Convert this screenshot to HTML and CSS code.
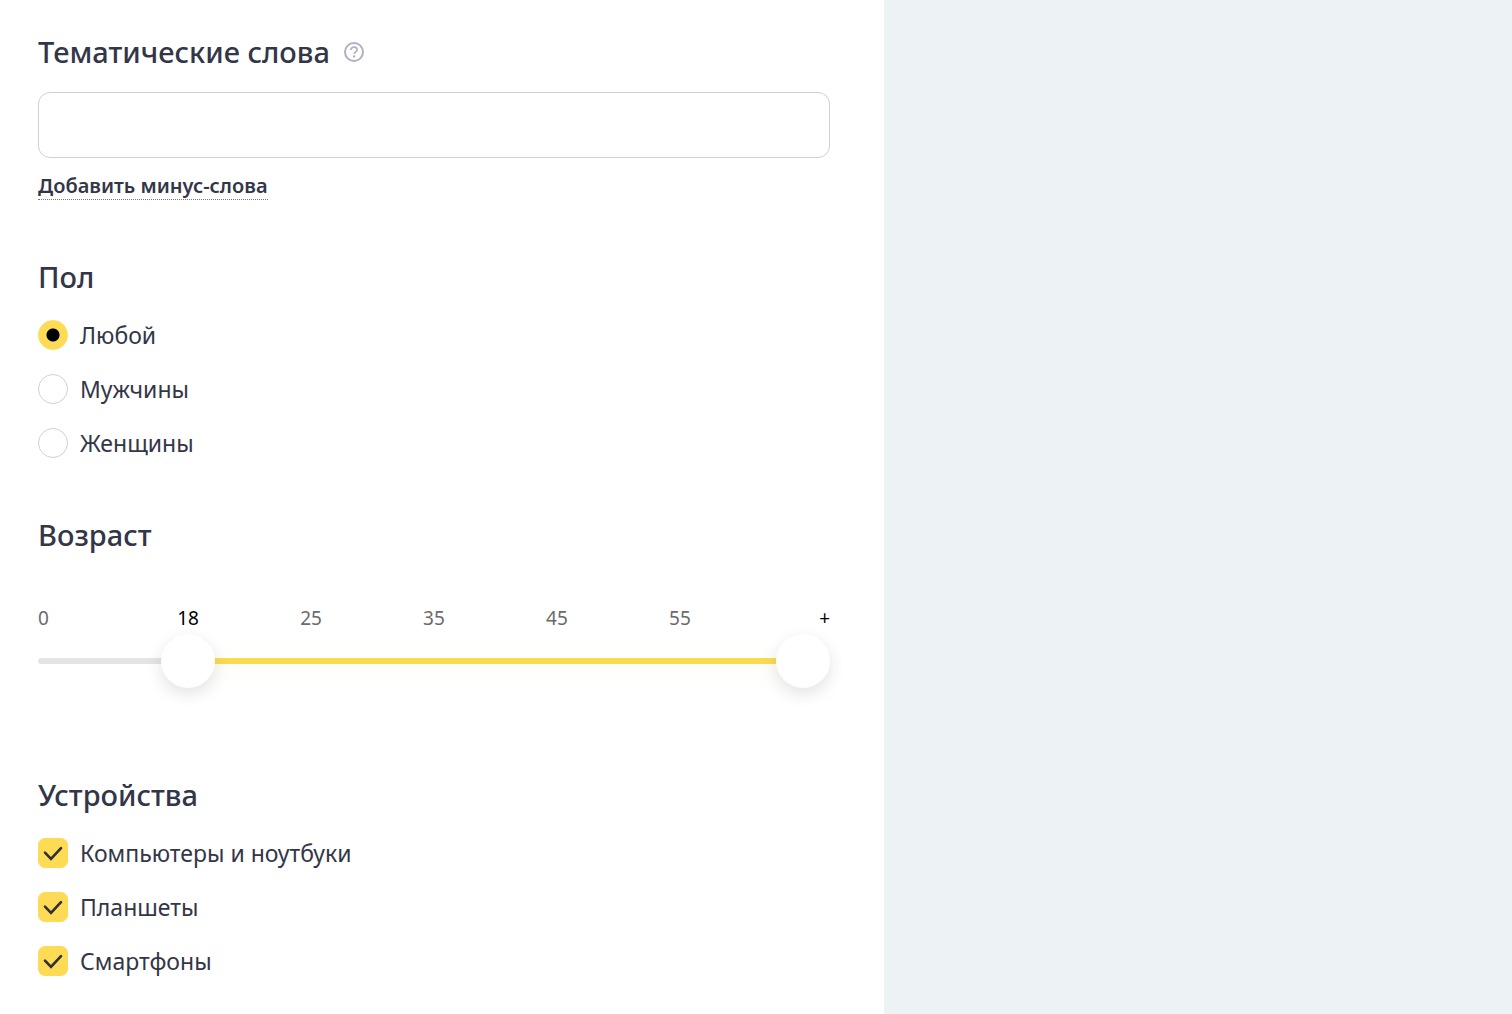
FILE: index.html
```html
<!DOCTYPE html>
<html lang="ru">
  <head>
    <meta charset="UTF-8" />
    <meta name="viewport" content="width=device-width, initial-scale=1.0" />
    <title>Настройки аудитории</title>
    <link rel="stylesheet" href="styles.css">
  </head>
  <body>
    <main class="layout">
      <form class="panel">
        <section class="section">
          <div class="heading">
            <h2 class="title"><label for="words">Тематические слова</label></h2>
            <button class="help" type="button" aria-label="Справка">
              <svg width="20" height="20" viewBox="0 0 20 20" fill="none" stroke="currentColor">
                <circle cx="10" cy="10" r="9" stroke-width="2" />
                <path d="M6.9 8C6.9 6.2 8.2 5.2 10 5.2s3.1 1 3.1 2.6c0 2.1-2.9 2-2.9 4.1" stroke-width="1.7" />
                <circle cx="10.1" cy="14.4" r="1.2" fill="currentColor" stroke="none" />
              </svg>
            </button>
          </div>
          <input class="words" id="words" type="text" />
          <a class="minus" href="#">Добавить минус-слова</a>
        </section>

        <section class="section">
          <h2 class="title">Пол</h2>
          <div class="options">
            <label class="option"><input class="radio" type="radio" name="gender" value="any" checked /> Любой</label>
            <label class="option"><input class="radio" type="radio" name="gender" value="male" /> Мужчины</label>
            <label class="option"><input class="radio" type="radio" name="gender" value="female" /> Женщины</label>
          </div>
        </section>

        <section class="section age">
          <h2 class="title">Возраст</h2>
          <div class="scale" id="scale">
            <span>0</span>
            <span>18</span>
            <span>25</span>
            <span>35</span>
            <span>45</span>
            <span>55</span>
            <span>+</span>
          </div>
          <div class="slider" id="slider">
            <div class="track"></div>
            <div class="fill"></div>
            <input class="range" id="from" type="range" min="0" max="6" value="1" aria-label="Возраст от" />
            <input class="range" id="to" type="range" min="0" max="6" value="6" aria-label="Возраст до" />
          </div>
        </section>

        <section class="section">
          <h2 class="title">Устройства</h2>
          <div class="options">
            <label class="option">
              <span class="check">
                <input type="checkbox" name="desktop" checked />
                <svg viewBox="0 0 30 30"><path d="M7 14.6l6 6.2L23 10.2" /></svg>
              </span>
              Компьютеры и ноутбуки
            </label>
            <label class="option">
              <span class="check">
                <input type="checkbox" name="tablet" checked />
                <svg viewBox="0 0 30 30"><path d="M7 14.6l6 6.2L23 10.2" /></svg>
              </span>
              Планшеты
            </label>
            <label class="option">
              <span class="check">
                <input type="checkbox" name="phone" checked />
                <svg viewBox="0 0 30 30"><path d="M7 14.6l6 6.2L23 10.2" /></svg>
              </span>
              Смартфоны
            </label>
          </div>
        </section>
      </form>
    </main>

    <script>
      const slider = document.getElementById("slider");
      const from = document.getElementById("from");
      const to = document.getElementById("to");
      const marks = document.querySelectorAll("#scale span");

      // закрашиваем выбранный отрезок и выделяем подписи над ручками
      function update() {
        slider.style.setProperty("--from", from.value);
        slider.style.setProperty("--to", to.value);
        marks.forEach((mark, i) => {
          mark.classList.toggle("active", i == from.value || i == to.value);
        });
      }

      from.addEventListener("input", () => {
        if (+from.value >= +to.value) from.value = to.value - 1;
        update();
      });
      to.addEventListener("input", () => {
        if (+to.value <= +from.value) to.value = +from.value + 1;
        update();
      });
      update();
    </script>
  </body>
</html>
```
FILE: styles.css
```css
* {
  box-sizing: border-box;
}

body {
  margin: 0;
  background-color: #edf2f5;
  color: #333647;
  font-family: "Noto Sans", "Open Sans", sans-serif;
  font-size: 23px;
}

.layout {
  display: grid;
  grid-template-columns: 221fr 157fr;
  min-height: 100vh;
}

.panel {
  padding: 33px 54px 38px 38px;
  background-color: #fff;
}

.section + .section {
  margin-top: 58px;
}

/* Заголовки */
.heading {
  display: flex;
  align-items: center;
  gap: 14px;
}

.title {
  margin: 0;
  font-size: 29px;
  font-weight: 500;
  line-height: 38px;
}

.help {
  display: flex;
  padding: 0;
  border: 0;
  background: none;
  color: #b1b0c4;
  cursor: pointer;
}

/* Тематические слова */
.words {
  display: block;
  width: 100%;
  height: 66px;
  margin: 21px 0 14px;
  padding: 0 20px;
  border: 1px solid #cdd1d4;
  border-radius: 12px;
  background-color: #fff;
  color: inherit;
  font: inherit;
}

.minus {
  display: block;
  width: fit-content;
  border-bottom: 1px dotted #777;
  color: inherit;
  font-size: 20px;
  font-weight: 600;
  line-height: 27px;
  text-decoration: none;
}

/* Радиокнопки и чекбоксы */
.options {
  display: flex;
  flex-direction: column;
  align-items: flex-start;
  gap: 24px;
  margin-top: 24px;
}

.option {
  display: flex;
  align-items: center;
  gap: 12px;
  line-height: 30px;
  cursor: pointer;
}

.radio {
  appearance: none;
  width: 30px;
  height: 30px;
  margin: 0;
  border: 1px solid #cdd1d4;
  border-radius: 50%;
  background-color: #fff;
}

.radio:checked {
  border-color: #fddb55;
  background: radial-gradient(circle, #000 6px, #fddb55 7px);
}

.check {
  position: relative;
  width: 30px;
  height: 30px;
}

.check input {
  appearance: none;
  display: block;
  width: 30px;
  height: 30px;
  margin: 0;
  border: 1px solid #cdd1d4;
  border-radius: 7px;
}

.check input:checked {
  border-color: #fddb55;
  background-color: #fddb55;
}

.check svg {
  position: absolute;
  inset: 0;
  fill: none;
  stroke: #2f3033;
  stroke-width: 2.6;
  stroke-linecap: round;
  pointer-events: none;
}

.check input:not(:checked) + svg {
  display: none;
}

/* Возраст */
.age {
  padding-bottom: 30px;
}

.scale {
  display: grid;
  grid-template-columns: 1fr repeat(5, calc((100% - 54px) / 6)) 1fr;
  margin-top: 52px;
  color: #6b6b6b;
  font-size: 19px;
  line-height: 24px;
  text-align: center;
}

.scale span:first-child {
  text-align: left;
}

.scale span:last-child {
  text-align: right;
}

.scale .active {
  color: #000;
}

.slider {
  --step: calc((100% - 54px) / 6);
  position: relative;
  height: 54px;
  margin-top: 4px;
}

.track,
.fill {
  position: absolute;
  top: 24px;
  height: 6px;
}

.track {
  left: 0;
  right: 0;
  border-radius: 3px;
  background-color: #e4e4e4;
}

.fill {
  left: calc(27px + var(--step) * var(--from));
  right: calc(27px + var(--step) * (6 - var(--to)));
  background-color: #fadb50;
  box-shadow: 0 6px 20px rgba(250, 219, 80, 0.15);
}

.range {
  appearance: none;
  position: absolute;
  inset: 0;
  width: 100%;
  height: 54px;
  margin: 0;
  background: none;
  pointer-events: none;
}

.range::-webkit-slider-thumb {
  appearance: none;
  width: 54px;
  height: 54px;
  border-radius: 50%;
  background-color: #fff;
  box-shadow: 0 6px 16px rgba(30, 40, 60, 0.13);
  cursor: pointer;
  pointer-events: auto;
}
```
